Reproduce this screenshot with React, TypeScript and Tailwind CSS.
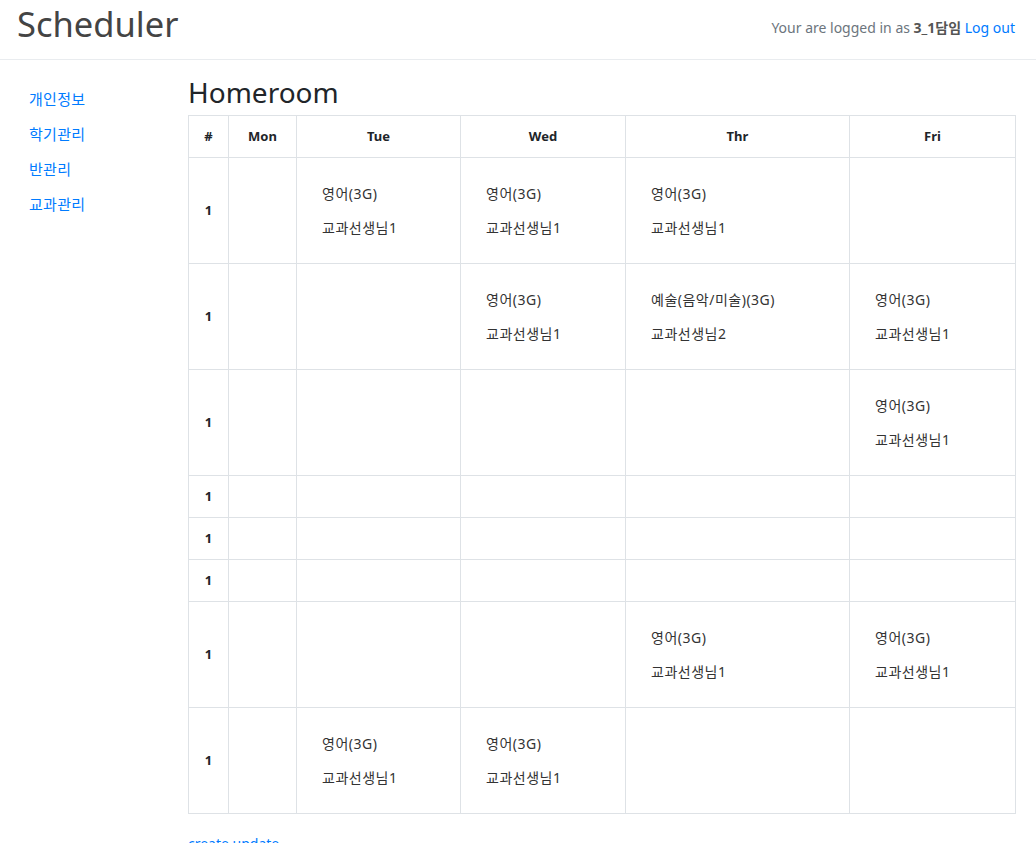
import React from 'react';

type Slot = { subject: string; teacher: string } | null;

interface Row {
  period: string;
  tall: boolean;
  cells: Slot[];
}

const eng: Slot = { subject: '영어(3G)', teacher: '교과선생님1' };
const art: Slot = { subject: '예술(음악/미술)(3G)', teacher: '교과선생님2' };

const rows: Row[] = [
  { period: '1', tall: true, cells: [null, eng, eng, eng, null] },
  { period: '1', tall: true, cells: [null, null, eng, art, eng] },
  { period: '1', tall: true, cells: [null, null, null, null, eng] },
  { period: '1', tall: false, cells: [null, null, null, null, null] },
  { period: '1', tall: false, cells: [null, null, null, null, null] },
  { period: '1', tall: false, cells: [null, null, null, null, null] },
  { period: '1', tall: true, cells: [null, null, null, eng, eng] },
  { period: '1', tall: true, cells: [null, eng, eng, null, null] },
];

const days = ['Mon', 'Tue', 'Wed', 'Thr', 'Fri'];
const widths = ['w-[68px]', 'w-[164px]', 'w-[165px]', 'w-[224px]', 'w-[166px]'];

const menu = ['개인정보', '학기관리', '반관리', '교과관리'];

export default function App() {
  return (
    <div
      className="min-h-[843px] bg-white text-[#212529]"
      style={{ fontFamily: '"Noto Sans", "Noto Sans CJK KR", sans-serif' }}
    >
      <header className="flex h-[60px] items-center justify-between border-b border-[#e9ecef] pl-[17px] pr-[21px]">
        <div className="-mt-[11px] text-[34.5px] leading-none text-[#444]">Scheduler</div>
        <div className="-mt-[5px] text-[14px] text-[#6c757d]">
          Your are logged in as <b className="font-bold text-[#555]">3_1담임</b>{' '}
          <a className="text-[#007bff]">Log out</a>
        </div>
      </header>

      <div className="flex">
        <nav className="flex w-[188px] flex-col gap-[13px] pl-[29px] pt-[28px]">
          {menu.map((m) => (
            <a key={m} className="text-[15px] leading-[22px] tracking-[0.3px] text-[#007bff]">
              {m}
            </a>
          ))}
        </nav>

        <main className="w-[827px] pt-[14px]">
          <h2 className="mb-[5px] text-[28px] leading-[36px] text-[#212529]">Homeroom</h2>
          <table className="w-full table-fixed border-collapse text-[13px]">
            <thead>
              <tr className="h-[42px]">
                <th className="w-[40px] border border-[#dee2e6] font-bold">#</th>
                {days.map((d, i) => (
                  <th key={d} className={`${widths[i]} border border-[#dee2e6] font-bold`}>
                    {d}
                  </th>
                ))}
              </tr>
            </thead>
            <tbody>
              {rows.map((r, ri) => (
                <tr key={ri} className={r.tall ? 'h-[106px]' : 'h-[42px]'}>
                  <td className="border border-[#dee2e6] text-center font-bold">{r.period}</td>
                  {r.cells.map((c, ci) => (
                    <td key={ci} className="border border-[#dee2e6] pl-[25px] align-middle">
                      {c && (
                        <div className="flex flex-col gap-[13px] text-[14px] tracking-[0.5px] text-[#333]">
                          <span className="leading-[21px]">{c.subject}</span>
                          <span className="leading-[21px]">{c.teacher}</span>
                        </div>
                      )}
                    </td>
                  ))}
                </tr>
              ))}
            </tbody>
          </table>
          <div className="mt-[17px]">
            <a className="text-[14px] text-[#007bff]">create update</a>
          </div>
        </main>
      </div>
    </div>
  );
}
